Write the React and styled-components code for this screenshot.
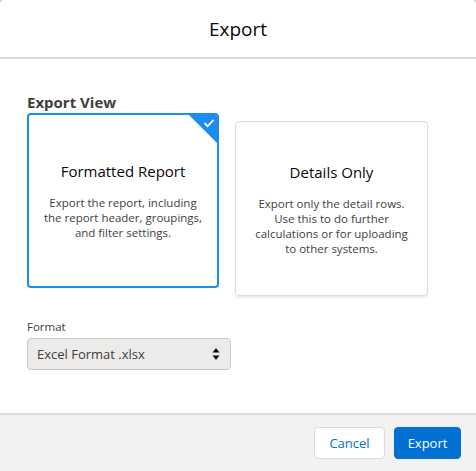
import styled, { createGlobalStyle } from "styled-components";

// Component

const GlobalStyle = createGlobalStyle`
  html, body {
    margin: 0;
    padding: 0;
    background: #c9c7c5;
  }
  body {
    font-family: "Open Sans", "Noto Sans", sans-serif;
    color: #080707;
  }
`;

function CheckBadge() {
  return (
    <Badge>
      <svg width="12" height="10" viewBox="0 0 12 10">
        <path d="M1.5 5.2 L4.6 8.2 L10.6 1.8" fill="none" stroke="#fff" strokeWidth="1.8" />
      </svg>
    </Badge>
  );
}

function ViewCard({ title, lines, selected }) {
  return (
    <Card $selected={selected}>
      {selected && <CheckBadge />}
      <CardTitle>{title}</CardTitle>
      <CardText>
        {lines.map((l) => (
          <span key={l}>{l}</span>
        ))}
      </CardText>
    </Card>
  );
}

export default function App() {
  return (
    <>
      <GlobalStyle />
      <Modal>
        <Header>
          <Title>Export</Title>
        </Header>
        <Body>
          <SectionLabel>Export View</SectionLabel>
          <Cards>
            <ViewCard
              selected
              title="Formatted Report"
              lines={[
                "Export the report, including",
                "the report header, groupings,",
                "and filter settings.",
              ]}
            />
            <ViewCard
              title="Details Only"
              lines={[
                "Export only the detail rows.",
                "Use this to do further",
                "calculations or for uploading",
                "to other systems.",
              ]}
            />
          </Cards>
          <FieldLabel>Format</FieldLabel>
          <Select>
            <span>Excel Format .xlsx</span>
            <Arrows>
              <svg width="8" height="14" viewBox="0 0 8 14">
                <path d="M4 1 L7.5 5.5 H0.5 Z" fill="#080707" />
                <path d="M4 13 L7.5 8.5 H0.5 Z" fill="#080707" />
              </svg>
            </Arrows>
          </Select>
        </Body>
        <Footer>
          <Button $width="71px">Cancel</Button>
          <Button $brand $width="67px">Export</Button>
        </Footer>
      </Modal>
    </>
  );
}

// Style

const Modal = styled.div`
  width: 476px;
  height: 471px;
  display: flex;
  flex-direction: column;
  background: #fff;
  border-radius: 4px 4px 0 0;
  overflow: hidden;
`;

const Header = styled.header`
  flex: 0 0 59px;
  box-sizing: border-box;
  display: flex;
  align-items: center;
  justify-content: center;
  border-bottom: 2px solid #dddbda;
`;

const Title = styled.h2`
  margin: 0;
  font-size: 19px;
  font-weight: 400;
  color: #080707;
`;

const Body = styled.main`
  flex: 1;
  padding: 33px 27px 0;
  display: flex;
  flex-direction: column;
`;

const SectionLabel = styled.div`
  font-size: 15px;
  font-weight: 700;
  color: #3e3e3c;
  line-height: 20px;
`;

const Cards = styled.div`
  display: flex;
  align-items: flex-start;
  gap: 16px;
  margin-top: 1px;
`;

const Card = styled.div`
  position: relative;
  box-sizing: border-box;
  width: ${(p) => (p.$selected ? "192px" : "193px")};
  height: 175px;
  margin-top: ${(p) => (p.$selected ? "0" : "8px")};
  border: ${(p) => (p.$selected ? "2px solid #1b8cf0" : "1px solid #dddbda")};
  border-radius: 4px;
  box-shadow: ${(p) => (p.$selected ? "none" : "0 2px 2px rgba(0,0,0,0.08)")};
  display: flex;
  flex-direction: column;
  align-items: center;
  justify-content: center;
  text-align: center;
  overflow: hidden;
`;

const Badge = styled.div`
  position: absolute;
  top: 0;
  right: 0;
  width: 0;
  height: 0;
  border-top: 28px solid #1b8cf0;
  border-left: 28px solid transparent;

  svg {
    position: absolute;
    top: -25px;
    right: 2px;
  }
`;

const CardTitle = styled.div`
  font-size: 15px;
  line-height: 20px;
  color: #080707;
  margin-bottom: 14px;
`;

const CardText = styled.div`
  font-size: 11.5px;
  line-height: 15px;
  color: #3e3e3c;
  display: flex;
  flex-direction: column;
`;

const FieldLabel = styled.div`
  margin-top: 23px;
  font-size: 11.5px;
  line-height: 16px;
  color: #3e3e3c;
`;

const Select = styled.div`
  margin-top: 3px;
  width: 204px;
  height: 32px;
  box-sizing: border-box;
  border: 1px solid #c9c7c5;
  border-radius: 4px;
  background: #ecebea;
  display: flex;
  align-items: center;
  justify-content: space-between;
  padding: 0 10px 0 9px;
  font-size: 13px;
  color: #3e3e3c;
`;

const Arrows = styled.span`
  display: flex;
`;

const Footer = styled.footer`
  flex: 0 0 58px;
  box-sizing: border-box;
  border-top: 2px solid #dddbda;
  background: #f3f2f2;
  display: flex;
  justify-content: flex-end;
  align-items: flex-start;
  gap: 9px;
  padding: 12px 15px 0;
`;

const Button = styled.button`
  width: ${(p) => p.$width};
  height: 32px;
  box-sizing: border-box;
  padding: 0;
  border-radius: 4px;
  font-family: inherit;
  font-size: 13px;
  border: 1px solid ${(p) => (p.$brand ? "#0070d2" : "#dddbda")};
  background: ${(p) => (p.$brand ? "#0070d2" : "#fff")};
  color: ${(p) => (p.$brand ? "#fff" : "#0070d2")};
`;
